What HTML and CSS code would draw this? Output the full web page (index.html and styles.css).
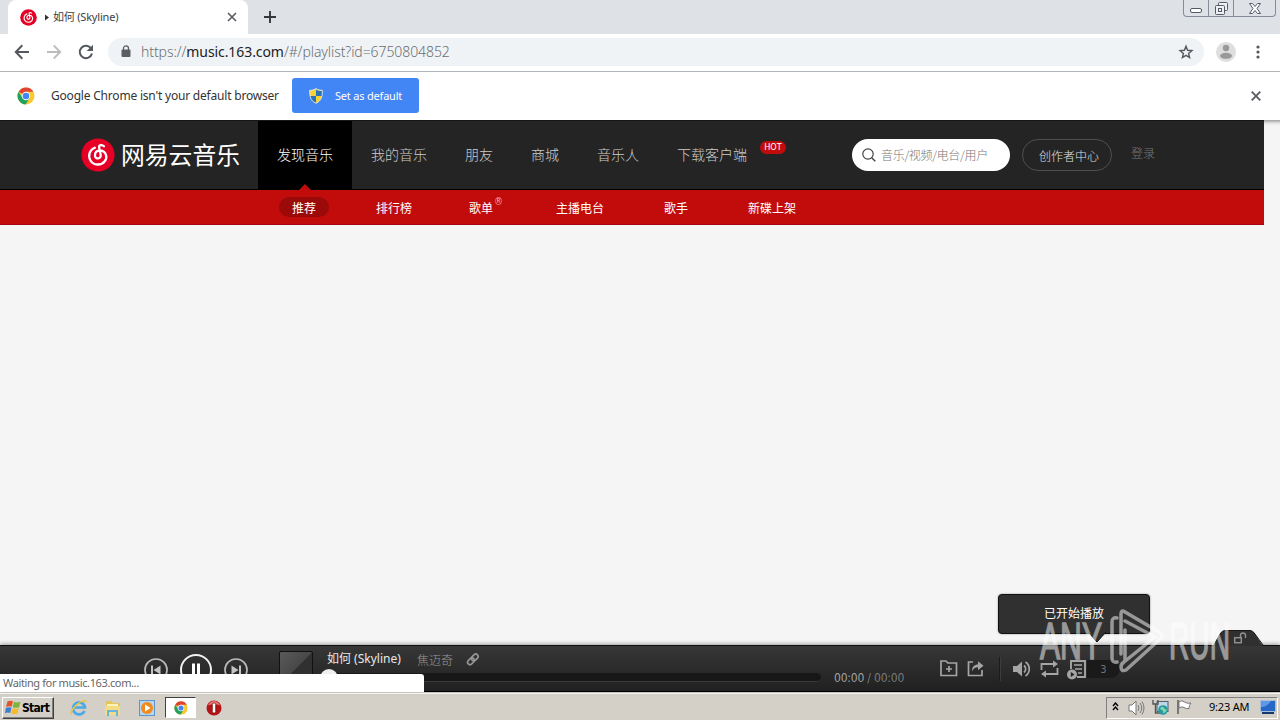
FILE: index.html
```html
<!DOCTYPE html>
<html lang="zh-CN">
<head>
  <meta charset="UTF-8">
  <title>如何 (Skyline)</title>
  <link rel="stylesheet" href="styles.css">
</head>
<body>
  <svg width="0" height="0" class="defs">
    <symbol id="netease" viewBox="0 0 34 34">
      <circle cx="17" cy="17" r="16.600" fill="#e60026"/>
      <path d="M23 8.300c-2-2-5.300-1.300-4.900 1.300l1.600 7.400c.7 3.800-5.200 4.600-5.700 1-.5-3.500 1.800-5.600 4.800-5.500 6.200.2 8.200 6.700 5 10.700-3.800 4.700-11.300 4.300-14.300-.7-2.800-4.700-1-10.600 4.300-12.700" fill="none" stroke="#fff" stroke-width="2.300" stroke-linecap="round"/>
    </symbol>
    <symbol id="chrome" viewBox="0 0 18 18">
      <circle cx="9" cy="9" r="8.500" fill="#fbc92f"/>
      <path d="M9 9 1.600 4.800A8.500 8.500 0 0 1 16.400 4.800H9z" fill="#df4434"/>
      <path d="M1.600 4.800A8.500 8.500 0 0 0 8.600 17.500L12.600 11 9 9 5.400 11z" fill="#20a15c"/>
      <circle cx="9" cy="9" r="4.200" fill="#fff"/>
      <circle cx="9" cy="9" r="3.300" fill="#4286f4"/>
    </symbol>
  </svg>

  <!-- tab strip -->
  <div class="tabstrip">
    <div class="tab">
      <svg class="tab-icon" width="17" height="17"><use href="#netease"/></svg>
      <svg class="tab-play" width="5" height="7"><path d="M0 .5 4 3.500 0 6.500z" fill="#333"/></svg>
      <span class="tab-title">如何 (Skyline)</span>
      <svg width="10" height="10" viewBox="0 0 10 10"><path d="M1 1l8 8M9 1L1 9" stroke="#5a5e63" stroke-width="1.700"/></svg>
    </div>
    <svg class="newtab" width="12" height="12"><path d="M6 0v12M0 6h12" stroke="#34373c" stroke-width="1.900"/></svg>
    <div class="winbuttons">
      <span class="winbtn min"><svg width="13" height="6"><rect x=".5" y=".5" width="11" height="4" rx="1.500" fill="#fff" stroke="#555b66"/></svg></span>
      <span class="winbtn max"><svg width="13" height="13" fill="#eef0f3" stroke="#555b66"><rect x="3.500" y=".5" width="9" height="8" rx="1"/><rect x=".5" y="3.500" width="9" height="9" rx="1"/><rect x="3.500" y="6.500" width="3" height="3"/></svg></span>
      <span class="winbtn close"><svg width="12" height="11"><path d="M.5.5h3L6 3.500 8.500.5h3L8 5.500l3.500 5h-3L6 7.500l-2.500 3h-3L4 5.500z" fill="#fff" stroke="#555b66"/></svg></span>
    </div>
  </div>

  <!-- toolbar -->
  <div class="toolbar">
    <svg width="16" height="16" viewBox="0 0 16 16"><path d="M15 8H2M8.300 1.300 1.800 8l6.500 6.700" fill="none" stroke="#55595e" stroke-width="2"/></svg>
    <svg width="16" height="16" viewBox="0 0 16 16"><path d="M1 8h13M7.700 1.300 14.200 8l-6.500 6.700" fill="none" stroke="#babcbe" stroke-width="1.900"/></svg>
    <svg width="16" height="16" viewBox="0 0 16 16"><path d="M13.200 4.600A6.200 6.200 0 1 0 14 9.600" fill="none" stroke="#55595e" stroke-width="2"/><path d="M15 .8v6.300H8.700z" fill="#55595e"/></svg>
    <div class="omnibox">
      <svg width="10" height="13" viewBox="0 0 10 13"><rect x=".5" y="4.500" width="9" height="7.500" rx="1" fill="#5b5f64"/><path d="M2.500 5V3.400a2.500 2.500 0 0 1 5 0V5" fill="none" stroke="#5b5f64" stroke-width="1.300"/></svg>
      <span class="url"><i>https://</i><b>music.163.com</b>/#/playlist?id=6750804852</span>
      <svg width="16" height="16" viewBox="0 0 16 16"><path d="M8 2.200l1.600 4.100 4.300.3-3.300 2.800 1 4.200L8 11.300l-3.600 2.300 1-4.200-3.300-2.800 4.300-.3z" fill="none" stroke="#55595e" stroke-width="1.400"/></svg>
    </div>
    <svg class="avatar" width="20" height="20"><circle cx="10" cy="10" r="10" fill="#dedede"/><circle cx="10" cy="6" r="3.200" fill="#999"/><ellipse cx="10" cy="13.800" rx="6" ry="3" fill="#999"/></svg>
    <svg class="dots" width="4" height="14" fill="#55595e"><circle cx="2" cy="2" r="1.600"/><circle cx="2" cy="7" r="1.600"/><circle cx="2" cy="12" r="1.600"/></svg>
  </div>

  <!-- default browser bar -->
  <div class="infobar">
    <svg width="18" height="18"><use href="#chrome"/></svg>
    <span class="info-text">Google Chrome isn't your default browser</span>
    <div class="default-btn">
      <svg width="14" height="16" viewBox="0 0 14 16"><path d="M7 .6c2 1.400 4 1.700 6.300 1.700 0 6-.7 10.500-6.300 13C1.400 12.800.7 8.300.7 2.300 3 2.300 5 2 7 .6z" fill="#f9d331" stroke="#dbe5ee"/><path d="M7 8H1.500c.6 3 2.200 5.200 5.500 6.700zM7 1.500V8h5.500c.3-2 .3-3.500.3-5C10.500 3 8.500 2.600 7 1.500z" fill="#2974b8"/></svg>
      <span>Set as default</span>
    </div>
    <svg class="info-close" width="10" height="10"><path d="M.7.7l8.600 8.600M9.300.7L.7 9.300" stroke="#5a5e63" stroke-width="1.900"/></svg>
  </div>

  <div class="page">
    <div class="nav">
      <div class="logo">
        <svg width="34" height="34"><use href="#netease"/></svg>
        <span>网易云音乐</span>
      </div>
      <div class="nav-item active">发现音乐</div>
      <div class="nav-item">我的音乐</div>
      <div class="nav-item">朋友</div>
      <div class="nav-item">商城</div>
      <div class="nav-item">音乐人</div>
      <div class="nav-item">下载客户端<span class="hot">HOT</span></div>
      <div class="search">
        <svg width="14" height="14" viewBox="0 0 14 14"><circle cx="6" cy="6" r="5.200" fill="none" stroke="#444" stroke-width="1.200"/><path d="M9.700 9.700l3.600 3.600" stroke="#444" stroke-width="1.500"/></svg>
        <span>音乐/视频/电台/用户</span>
      </div>
      <div class="creator">创作者中心</div>
      <div class="login">登录</div>
    </div>
    <div class="subnav">
      <span class="sub current">推荐</span>
      <span class="sub">排行榜</span>
      <span class="sub songlist">歌单<sup>®</sup></span>
      <span class="sub">主播电台</span>
      <span class="sub">歌手</span>
      <span class="sub">新碟上架</span>
    </div>
    <div class="content"></div>

    <div class="player">
      <div class="controls">
        <svg width="26" height="26" viewBox="0 0 26 26"><circle cx="13" cy="13" r="11" fill="none" stroke="#b9b9b9" stroke-width="1.700"/><path d="M9 8.500v9" stroke="#c4c4c4" stroke-width="2"/><path d="M17.500 8.500v9L10.500 13z" fill="#c4c4c4"/></svg>
        <svg width="34" height="34" viewBox="0 0 34 34"><circle cx="17" cy="17" r="15" fill="none" stroke="#f2f2f2" stroke-width="2"/><path d="M14.500 10.500v13M19.500 10.500v13" stroke="#fff" stroke-width="3"/></svg>
        <svg width="26" height="26" viewBox="0 0 26 26"><circle cx="13" cy="13" r="11" fill="none" stroke="#b9b9b9" stroke-width="1.700"/><path d="M17 8.500v9" stroke="#c4c4c4" stroke-width="2"/><path d="M8.500 8.500v9l7-4.500z" fill="#c4c4c4"/></svg>
      </div>
      <div class="cover"></div>
      <div class="track">
        <div class="track-name">
          <span class="song">如何 (Skyline)</span>
          <span class="artist">焦迈奇</span>
          <svg width="14" height="13" viewBox="0 0 14 13" fill="none" stroke="#969696" stroke-width="1.700"><rect x="5" y="2" width="7.500" height="4.800" rx="2.400" transform="rotate(-45 8.800 4.400)"/><rect x="1.200" y="5.800" width="7.500" height="4.800" rx="2.400" transform="rotate(-45 5 8.200)"/></svg>
        </div>
        <div class="progress"><span class="knob"></span></div>
      </div>
      <div class="time">00:00<span> / 00:00</span></div>
      <div class="tools">
        <svg width="18" height="17" viewBox="0 0 18 17"><path d="M1 1h5l1.800 2H16.500v12.500H1z" fill="none" stroke="#a5a5a5" stroke-width="1.700"/><path d="M9 6v6M6 9h6" stroke="#a5a5a5" stroke-width="1.700"/></svg>
        <svg width="18" height="17" viewBox="0 0 18 17"><path d="M6 2H1.500v13.500H15V10" fill="none" stroke="#a5a5a5" stroke-width="1.700"/><path d="M5 11.500c0-5 2.500-7 6-7V1.200l5.500 4.600-5.500 4.500V7.200c-3 0-4.500 1.300-6 4.300z" fill="#a5a5a5"/></svg>
        <span class="divider"></span>
        <svg width="18" height="18" viewBox="0 0 18 18"><path d="M0 6h4l5-4.500v15L4 12H0z" fill="#a5a5a5"/><path d="M11 5.500a4.500 4.500 0 0 1 0 7M12.500 2c5 3.500 5 10.500 0 14" fill="none" stroke="#a5a5a5" stroke-width="1.700"/></svg>
        <svg width="19" height="18" viewBox="0 0 19 18"><path d="M1.500 10V4H14M17.500 8v6H5" fill="none" stroke="#a5a5a5" stroke-width="1.800"/><path d="M13 .5 18 4l-5 3.500zM6 10.500 1 14l5 3.500z" fill="#a5a5a5"/></svg>
        <div class="playlist">
          <svg width="20" height="20" viewBox="0 0 20 20"><path d="M4 9V1h14v16h-8" fill="none" stroke="#a5a5a5" stroke-width="1.900"/><path d="M7 5h8M8 9h7M11 13h4" stroke="#a5a5a5" stroke-width="1.600"/><circle cx="5" cy="14.500" r="5" fill="#a5a5a5"/><path d="M3.800 12v5l3.700-2.500z" fill="#222"/></svg>
          <span>3</span>
        </div>
      </div>
    </div>

    <svg class="lock-tab" width="52" height="16" viewBox="0 0 52 16"><path d="M0 16 6 4Q8 .5 11 .5H36Q39 .5 41 4L49 16z" fill="#303030"/><path d="M0 15 6 4Q8 .5 11 .5H36Q39 .5 41 4L49 15" fill="none" stroke="#161616"/><rect x="20.700" y="7.700" width="6.600" height="5" fill="none" stroke="#8f8f8f" stroke-width="1.500"/><path d="M26.500 7V5.500a2.300 2.300 0 0 1 5 0V8" fill="none" stroke="#8f8f8f" stroke-width="1.400"/></svg>
    <div class="tip">已开始播放
      <svg width="18" height="11"><path d="M0 0 9 10 18 0" fill="#303030" stroke="#111"/></svg>
    </div>
    <div class="status">Waiting for music.163.com...</div>
  </div>

  <!-- windows taskbar -->
  <div class="taskbar">
    <div class="start">
      <svg width="16" height="15" viewBox="0 0 16 15"><path d="M2.500 1.500Q5 0 8 1.300L6.700 6.700Q4 5.500 1 6.900z" fill="#e5532a"/><path d="M9 1.700q3 1.500 6.500 0L14 7.200q-3 1.300-6.300 0z" fill="#7db53b"/><path d="M.8 7.900Q4 6.600 6.500 7.700L5.200 13Q2.500 12 0 13.200z" fill="#3e7ed0"/><path d="M7.500 8.200q3 1.300 6.300 0l-1.400 5.300q-3 1.400-6.200 0z" fill="#f5bb2d"/></svg>
      <span>Start</span>
    </div>
    <div class="quick">
      <svg width="18" height="18" viewBox="0 0 18 18"><path d="M14.500 12A6 6 0 1 1 15 8.500H4" fill="none" stroke="#4aa9e8" stroke-width="2.700"/><path d="M1.500 15.500C-1 12 11-1 17 2.500" fill="none" stroke="#ecc53d" stroke-width="1.400"/></svg>
      <svg width="18" height="18" viewBox="0 0 18 18"><path d="M2 2h6l1 2h7v12H2z" fill="#e6c55c"/><path d="M3 5h11v6H3z" fill="#fbf3b9"/><path d="M1 7h15v9H1z" fill="#f4dc83"/><path d="M4 17v-5h9v5" fill="none" stroke="#6bb4dd" stroke-width="2"/></svg>
      <svg width="18" height="18" viewBox="0 0 18 18"><rect x="1.500" y="1.500" width="15" height="15" fill="#b4d7f1" stroke="#5e94c8"/><circle cx="9" cy="9" r="6" fill="#f08a1d"/><path d="M7 5.500v7L12.500 9z" fill="#fff"/></svg>
    </div>
    <div class="running"><svg width="14" height="14"><use href="#chrome"/></svg></div>
    <svg width="16" height="16" viewBox="0 0 16 16"><circle cx="8" cy="8" r="7.500" fill="#b51316"/><path d="M2 5.500C4-.5 12-.5 14 5.500 10 3.500 6 3.500 2 5.500z" fill="#e37672"/><rect x="6.300" y="3" width="3.400" height="10" rx="1.500" fill="#fff" stroke="#6f0808" stroke-width=".7"/></svg>
    <div class="tray">
      <svg width="7" height="9" viewBox="0 0 7 9"><path d="M1 4l2.500-3L6 4M1 8l2.500-3L6 8" fill="none" stroke="#000" stroke-width="1.400"/></svg>
      <svg class="t-vol" width="17" height="16" viewBox="0 0 17 16"><path d="M1 5h3l4-4v14l-4-4H1z" fill="#fff" stroke="#777"/><path d="M10 5q2 3 0 6M12 3q3.500 5 0 10M14 1.500q4 6.500 0 13" fill="none" stroke="#777"/></svg>
      <svg class="t-net" width="17" height="16" viewBox="0 0 17 16"><rect x="5" y="2.500" width="11" height="10" fill="#bdd8e8" stroke="#526171"/><path d="M1 1v4h5V1M3.500 5v9H8" fill="none" stroke="#555" stroke-width="1.400"/><circle cx="11" cy="11" r="4.800" fill="#2799a0"/><path d="M8 10q2-4 4-1t3 1q-1 4-4 4 1-3-3-4z" fill="#84d7a9"/></svg>
      <svg class="t-flag" width="17" height="16" viewBox="0 0 17 16"><path d="M2 1v14" stroke="#666" stroke-width="1.700"/><path d="M3 2.500q3-1.500 5.500.5t6.500 1q-2 2-2 5.500-3 .6-5-1t-5 .5z" fill="#fff" stroke="#777"/></svg>
      <span class="clock">9:23 AM</span>
      <svg width="16" height="14" viewBox="0 0 16 14"><rect x=".5" y=".5" width="15" height="11" fill="#2767c5" stroke="#a9bdd7"/><path d="M1 7Q7 7 11 1H1z" fill="#5d99e8"/><path d="M2 13h12" stroke="#15396f" stroke-width="2"/></svg>
    </div>
  </div>

  <svg class="watermark" width="196" height="66" viewBox="0 0 196 66">
    <g fill="#fff" stroke="#fff" stroke-width="1.500">
      <text x="2" y="49.500" textLength="62" lengthAdjust="spacingAndGlyphs">ANY</text>
      <text x="131" y="49.500" textLength="61" lengthAdjust="spacingAndGlyphs">RUN</text>
    </g>
    <g fill="none" stroke="#fff" stroke-width="3.500" stroke-linejoin="round" stroke-linecap="round">
      <path d="M79 9q-5-1-5 4v36q0 5 5 4M83 45V5q0-5 4-2l34 20q6 4 0 8L88 61q-5 2-5-3 0-3 3-5l31-25-30-16M87 21v31"/>
    </g>
  </svg>
</body>
</html>
```
FILE: styles.css
```css
* {
  box-sizing: border-box;
}
body {
  margin: 0;
  width: 1280px;
  height: 720px;
  overflow: hidden;
  position: relative;
  display: flex;
  flex-direction: column;
  background: #f5f5f5;
  font-family: "DejaVu Sans Condensed", "Noto Sans CJK SC", sans-serif;
  font-size: 12px;
  white-space: nowrap;
}
svg {
  display: block;
  flex: none;
}
.defs {
  position: absolute;
}

/* browser */
.tabstrip {
  flex: none;
  height: 34px;
  display: flex;
  align-items: flex-start;
  background: #dee1e6;
}
.tab {
  width: 240px;
  height: 34px;
  margin-left: 8px;
  padding: 0 11px 0 12px;
  display: flex;
  align-items: center;
  background: #fff;
  border-radius: 8px 8px 0 0;
}
.tab-play {
  margin: 0 3px 0 8px;
}
.tab-title {
  flex: 1;
  margin-top: -2px;
  font-family: "Noto Sans", "Noto Sans CJK SC", sans-serif;
  font-size: 11px;
  letter-spacing: -.2px;
  color: #3c4043;
}
.newtab {
  margin: 11px 0 0 16px;
}
.winbuttons {
  display: flex;
  width: 93px;
  height: 17px;
  margin: 0 4px 0 auto;
  border: 1px solid #868c99;
  border-top: 0;
  border-radius: 0 0 4px 4px;
}
.winbtn {
  display: flex;
  justify-content: center;
  width: 25px;
  border-right: 1px solid #868c99;
}
.min {
  padding-top: 8px;
}
.max {
  padding-top: 2px;
}
.close {
  width: 41px;
  padding-top: 3px;
  border: 0;
}
.toolbar {
  flex: none;
  height: 38px;
  padding: 0 20px 2px 14px;
  display: flex;
  align-items: center;
  gap: 16px;
  background: #fff;
  border-bottom: 1px solid #b3b5b8;
}
.omnibox {
  width: 1096px;
  height: 28px;
  margin-left: -2px;
  padding: 0 10px 0 13px;
  display: flex;
  align-items: center;
  background: #f0f3f5;
  border-radius: 14px;
}
.url {
  flex: 1;
  margin-left: 10px;
  font-family: "Noto Sans", sans-serif;
  font-size: 14px;
  font-weight: 300;
  letter-spacing: -.08px;
  color: #6a6e73;
}
.url i {
  font-style: normal;
}
.url b {
  font-weight: 400;
  color: #202124;
}
.avatar {
  margin-left: -4px;
}
.dots {
  margin-left: 4px;
}
.infobar {
  flex: none;
  height: 48px;
  padding-left: 17px;
  display: flex;
  align-items: center;
  background: #fff;
}
.info-text {
  width: 241px;
  margin: -2px 0 0 16px;
  font-family: "Noto Sans", sans-serif;
  font-size: 12px;
  letter-spacing: -.2px;
  color: #333;
}
.default-btn {
  width: 127px;
  height: 35px;
  margin-top: -1px;
  padding-left: 17px;
  display: flex;
  align-items: center;
  gap: 12px;
  background: #4285f4;
  border-radius: 3px;
  color: #fff;
  font-family: "Noto Sans", sans-serif;
  font-size: 11px;
  letter-spacing: -.2px;
}
.info-close {
  margin: 0 19px 0 auto;
}

/* music site */
.page {
  flex: 1;
  position: relative;
  display: flex;
  flex-direction: column;
  box-shadow: inset 0 6px 4px -5px #777;
}
.nav {
  width: 1264px;
  height: 70px;
  padding-left: 81px;
  display: flex;
  background: #242424;
  border-top: 1px solid #171717;
  border-bottom: 1px solid #000;
}
.logo {
  width: 177px;
  display: flex;
  align-items: center;
  gap: 6px;
  color: #fff;
  font-family: "Noto Sans CJK SC", sans-serif;
  font-size: 23.800px;
}
.logo span {
  margin-top: -3px;
}
.nav-item {
  position: relative;
  padding: 0 19px;
  font-family: "Noto Sans CJK SC", sans-serif;
  font-size: 14px;
  font-weight: 300;
  line-height: 67px;
  color: #ccc;
}
.active {
  background: #000;
  color: #fff;
}
.active::after {
  content: "";
  position: absolute;
  left: 41px;
  bottom: -1px;
  border: 6px solid transparent;
  border-top: 0;
  border-bottom-color: #c20c0c;
}
.hot {
  position: absolute;
  left: 102px;
  top: 20px;
  width: 26px;
  height: 13px;
  border-radius: 7px;
  background: #c20c0c;
  color: #fff;
  font: 9px/13px "DejaVu Sans Condensed", sans-serif;
  text-align: center;
}
.search {
  width: 158px;
  height: 32px;
  margin: 18px 12px 0 86px;
  padding-left: 10px;
  display: flex;
  align-items: center;
  gap: 5px;
  border-radius: 16px;
  background: #fff;
  color: #777;
  font-family: "Noto Sans CJK SC", sans-serif;
  font-weight: 300;
  letter-spacing: -.3px;
}
.search span {
  margin-top: -2px;
}
.creator {
  width: 90px;
  height: 32px;
  margin-top: 18px;
  padding-left: 4px;
  border: 1px solid #4f4f4f;
  border-radius: 16px;
  color: #e0e0e0;
  font-weight: 300;
  line-height: 35px;
  text-align: center;
}
.login {
  margin-left: 19px;
  color: #787878;
  font-weight: 300;
  line-height: 67px;
}
.subnav {
  width: 1264px;
  height: 35px;
  padding: 7px 0 0 279px;
  display: flex;
  gap: 34px;
  background: #c20c0c;
  border-bottom: 1px solid #a40011;
}
.sub {
  position: relative;
  height: 20px;
  padding: 0 13px;
  border-radius: 10px;
  font-size: 12px;
  line-height: 24px;
  color: #fff;
}
.sub.current {
  background: #9b0909;
}
.songlist {
  left: -3px;
}
.songlist sup {
  position: absolute;
  left: 38px;
  top: -5px;
  font-size: 10px;
  line-height: 20px;
  color: #f0a5a5;
}
.content {
  flex: 1;
}

/* player bar */
.player {
  height: 47px;
  padding-left: 143px;
  display: flex;
  overflow: hidden;
  background: linear-gradient(#373737, #202020);
  border-top: 1px solid #0e0e0e;
  border-bottom: 1px solid #000;
  box-shadow: 0 -1px 4px #999;
}
.controls {
  display: flex;
  align-items: center;
  gap: 10px;
  height: 48px;
  width: 136px;
}
.cover {
  width: 34px;
  height: 34px;
  margin: 5px 14px 0 0;
  border: 1px solid #111;
  border-radius: 2px;
  background: linear-gradient(135deg, #5a5a5a, #484848 50%, #303030 51%);
}
.track {
  width: 494px;
}
.track-name {
  display: flex;
  align-items: center;
  height: 27px;
}
.song {
  width: 90px;
  margin-top: -3px;
  color: #e8e8e8;
  font-family: "Noto Sans", "Noto Sans CJK SC", sans-serif;
  font-size: 12px;
}
.artist {
  width: 49px;
  margin-top: -1px;
  color: #9b9b9b;
  font-weight: 300;
}
.progress {
  position: relative;
  height: 9px;
  border-radius: 5px;
  background: #171717;
  border-bottom: 1px solid #3a3a3a;
}
.knob {
  position: absolute;
  left: -7px;
  top: -4px;
  width: 18px;
  height: 18px;
  border-radius: 50%;
  background: #efefef;
}
.time {
  width: 119px;
  padding: 24px 0 0 13px;
  color: #a1a1a1;
  font-size: 12px;
  line-height: 16px;
  letter-spacing: -.2px;
}
.time span {
  color: #797979;
}
.tools {
  display: flex;
  align-items: center;
  gap: 9px;
  height: 45px;
}
.divider {
  width: 2px;
  height: 24px;
  margin: 0 3px 0 5px;
  background: #1c1c1c;
  border-right: 1px solid #3c3c3c;
}
.playlist {
  display: flex;
  align-items: center;
  margin-left: -1px;
}
.playlist svg {
  margin-top: 2px;
}
.playlist span {
  width: 33px;
  height: 18px;
  border-radius: 0 9px 9px 0;
  background: #1a1a1a;
  color: #727272;
  font-size: 11px;
  line-height: 19px;
  text-align: center;
}
.lock-tab {
  position: absolute;
  left: 1214px;
  bottom: 46px;
}
.tip {
  position: absolute;
  left: 998px;
  top: 474px;
  width: 152px;
  height: 40px;
  border: 1px solid #111;
  border-radius: 4px;
  background: #303030;
  box-shadow: 0 0 2px #888;
  color: #fff;
  line-height: 38px;
  text-align: center;
}
.tip svg {
  position: absolute;
  left: 89px;
  top: 37px;
}
.status {
  position: absolute;
  left: 0;
  bottom: 0;
  width: 424px;
  height: 18px;
  padding-left: 3px;
  border-radius: 0 3px 0 0;
  background: #fff;
  color: #666;
  font-family: "Noto Sans", sans-serif;
  font-size: 11px;
  line-height: 18px;
  letter-spacing: -.38px;
}

/* taskbar */
.taskbar {
  flex: none;
  height: 28px;
  padding: 3px 2px 1px;
  display: flex;
  align-items: center;
  background: #d4d0c8;
  border-top: 1px solid #d4d0c8;
  box-shadow: inset 0 1px #fff;
}
.start {
  width: 52px;
  height: 22px;
  padding-left: 2px;
  display: flex;
  align-items: center;
  gap: 1px;
  border: 1px solid;
  border-color: #fff #404040 #404040 #fff;
  box-shadow: inset -1px -1px #808080;
  font-family: "DejaVu Sans Condensed", sans-serif;
  font-size: 12px;
  font-weight: bold;
  letter-spacing: -.7px;
}
.quick {
  width: 111px;
  padding-left: 16px;
  display: flex;
  gap: 16px;
}
.running {
  width: 31px;
  height: 21px;
  margin-right: 10px;
  display: flex;
  align-items: center;
  justify-content: center;
  background: #fff;
  border: 1px solid;
  border-color: #404040 #fff #fff #404040;
}
.tray {
  width: 172px;
  height: 22px;
  margin-left: auto;
  padding-left: 5px;
  display: flex;
  align-items: center;
  border: 1px solid;
  border-color: #808080 #fff #fff #808080;
}
.tray svg {
  margin-top: -2px;
}
.tray .t-vol {
  margin: 0 7px 0 9px;
}
.tray .t-flag {
  margin-left: 7px;
}
.clock {
  width: 51px;
  margin: -2px 0 0 16px;
  font-family: "Noto Sans", sans-serif;
  font-size: 11px;
  letter-spacing: -.2px;
}
.watermark {
  position: absolute;
  left: 1038px;
  top: 609px;
  opacity: .5;
  font-family: "Liberation Sans", sans-serif;
  font-size: 51px;
}
```
